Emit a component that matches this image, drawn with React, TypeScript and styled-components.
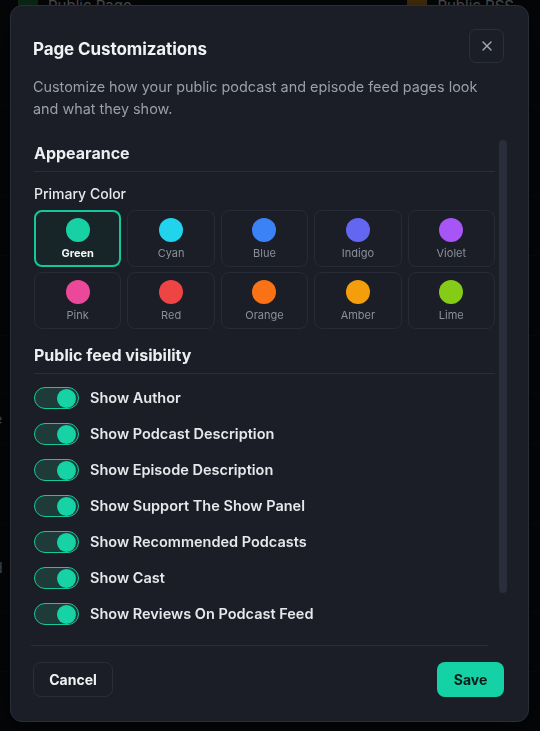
import React, { useState } from "react";
import styled, { createGlobalStyle, css } from "styled-components";
import { X } from "lucide-react";

const Global = createGlobalStyle`
  * { box-sizing: border-box; }
  html, body { margin: 0; padding: 0; background: #07080b; }
  body { font-family: Inter, "Noto Sans", sans-serif; -webkit-font-smoothing: antialiased; }
`;

const Page = styled.div`
  width: 540px;
  height: 731px;
  overflow: hidden;
  background: #0d1016;
  color: #c9ccd3;
  font-size: 15px;
`;

const TopLinks = styled.div`
  display: flex;
  justify-content: space-between;
  padding: 0 26px 0 18px;
  margin-top: -6px;
  height: 22px;
`;

const TopLink = styled.div`
  display: flex;
  align-items: center;
  gap: 10px;
  font-size: 15px;
  color: #d4d6db;
`;

const LinkIcon = styled.span<{ $c: string }>`
  width: 20px;
  height: 18px;
  border-radius: 4px;
  background: ${(p) => p.$c};
`;

const BgRows = styled.div`
  display: flex;
  flex-direction: column;
  padding-top: 50px;
`;

const BgRow = styled.div<{ $h: number; $accent?: boolean }>`
  height: ${(p) => p.$h}px;
  display: flex;
  justify-content: space-between;
  align-items: center;
  border-bottom: 1px solid #151a20;
  color: ${(p) => (p.$accent ? "#19d3a6" : "#cfd2d8")};
  font-size: 14px;
  white-space: nowrap;
`;

const BgLeft = styled.span`
  margin-left: -6px;
`;
const BgRight = styled.span`
  margin-right: -40px;
`;

const Overlay = styled.div`
  position: fixed;
  inset: 0;
  background: rgba(0, 0, 0, 0.62);
  display: flex;
  justify-content: flex-start;
  padding: 5px 0 0 10px;
`;

const Modal = styled.div`
  width: 519px;
  height: 717px;
  background: #1b1e26;
  border: 1px solid #2a2e38;
  border-radius: 12px;
  box-shadow: 0 10px 40px rgba(0, 0, 0, 0.6);
  display: flex;
  flex-direction: column;
  padding: 23px 24px 24px 22px;
`;

const Header = styled.div`
  display: flex;
  justify-content: space-between;
  align-items: flex-start;
`;

const Title = styled.h2`
  margin: 8px 0 0;
  font-size: 17px;
  line-height: 24px;
  font-weight: 700;
  color: #f1f2f4;
  letter-spacing: -0.1px;
`;

const CloseButton = styled.button`
  width: 35px;
  height: 34px;
  border-radius: 7px;
  border: 1px solid #2b2f3a;
  background: transparent;
  color: #a4a8b1;
  display: flex;
  align-items: center;
  justify-content: center;
  padding: 0;
  cursor: pointer;
`;

const Description = styled.p`
  margin: 13px 0 0;
  font-size: 14.4px;
  line-height: 22px;
  color: #9a9fa9;
`;

const ScrollFrame = styled.div`
  flex: 1;
  min-height: 0;
  margin-top: 18px;
  margin-right: -3px;
  display: flex;
`;

const ScrollBody = styled.div`
  flex: 1;
  min-width: 0;
  overflow-y: auto;
  scrollbar-width: none;
  &::-webkit-scrollbar { display: none; }
`;

const ScrollTrack = styled.div`
  width: 8px;
  padding-top: 2px;
  flex-shrink: 0;
`;

const ScrollThumb = styled.div`
  height: 453px;
  border-radius: 4px;
  background: #2a2e3a;
`;

const ScrollInner = styled.div`
  padding: 3px 4px 52px 1px;
`;

const SectionTitle = styled.h3<{ $gap?: number }>`
  margin: ${(p) => p.$gap ?? 0}px 0 0;
  padding-bottom: 6px;
  border-bottom: 1px solid #2a2e38;
  font-size: 16px;
  line-height: 24px;
  font-weight: 700;
  color: #eceef1;
`;

const FieldLabel = styled.div`
  margin-top: 12px;
  font-size: 14px;
  line-height: 20px;
  font-weight: 500;
  color: #e6e8ec;
`;

const SwatchGrid = styled.div`
  margin-top: 6px;
  display: grid;
  grid-template-columns: repeat(5, 1fr);
  column-gap: 6px;
  row-gap: 5px;
`;

const Swatch = styled.button<{ $selected: boolean }>`
  height: 57px;
  border-radius: 8px;
  border: 1px solid #272b35;
  background: transparent;
  display: flex;
  flex-direction: column;
  align-items: center;
  padding: 7px 0 0;
  gap: 4px;
  cursor: pointer;
  font-family: inherit;
  ${(p) =>
    p.$selected &&
    css`
      border: 2px solid #16c79c;
      background: #172529;
      padding-top: 6px;
    `}
`;

const Dot = styled.span<{ $c: string }>`
  width: 24px;
  height: 24px;
  border-radius: 50%;
  background: ${(p) => p.$c};
`;

const SwatchName = styled.span<{ $selected: boolean }>`
  font-size: 11px;
  line-height: 14px;
  color: ${(p) => (p.$selected ? "#f3f4f6" : "#8a8f99")};
  font-weight: ${(p) => (p.$selected ? 700 : 400)};
`;

const ToggleList = styled.div`
  margin-top: 13px;
  display: flex;
  flex-direction: column;
  gap: 14px;
`;

const ToggleRow = styled.label`
  display: flex;
  align-items: center;
  gap: 11px;
  cursor: pointer;
`;

const Track = styled.span<{ $on: boolean }>`
  width: 45px;
  height: 22px;
  border-radius: 11px;
  border: 1.5px solid ${(p) => (p.$on ? "#16c79c" : "#3a3f4b")};
  background: ${(p) => (p.$on ? "#1e3a39" : "#2a2e38")};
  display: flex;
  align-items: center;
  justify-content: ${(p) => (p.$on ? "flex-end" : "flex-start")};
  padding: 0 2px;
  flex-shrink: 0;
`;

const Knob = styled.span<{ $on: boolean }>`
  width: 19px;
  height: 19px;
  border-radius: 50%;
  background: ${(p) => (p.$on ? "#17d2a5" : "#9aa0aa")};
`;

const ToggleText = styled.span`
  font-size: 14.5px;
  line-height: 22px;
  font-weight: 600;
  color: #e6e8ec;
`;

const Footer = styled.div`
  margin-top: 13px;
  margin-left: -2px;
  margin-right: 16px;
  border-top: 1px solid #2a2e38;
`;

const FooterRow = styled.div`
  margin-top: 16px;
  margin-right: -16px;
  margin-left: 2px;
  display: flex;
  justify-content: space-between;
`;

const Button = styled.button<{ $primary?: boolean }>`
  height: 35px;
  border-radius: 8px;
  font-family: inherit;
  font-size: 14px;
  font-weight: 700;
  cursor: pointer;
  ${(p) =>
    p.$primary
      ? css`
          width: 67px;
          background: #14d2a6;
          border: none;
          color: #0d1a17;
        `
      : css`
          width: 80px;
          background: transparent;
          border: 1px solid #2a2e38;
          color: #f1f2f4;
        `}
`;

const colors = [
  { name: "Green", c: "#17d0a3" },
  { name: "Cyan", c: "#22d3ee" },
  { name: "Blue", c: "#3b82f6" },
  { name: "Indigo", c: "#6366f1" },
  { name: "Violet", c: "#a855f7" },
  { name: "Pink", c: "#ec4899" },
  { name: "Red", c: "#ef4444" },
  { name: "Orange", c: "#f97316" },
  { name: "Amber", c: "#f59e0b" },
  { name: "Lime", c: "#84cc16" },
];

const toggles = [
  "Show Author",
  "Show Podcast Description",
  "Show Episode Description",
  "Show Support The Show Panel",
  "Show Recommended Podcasts",
  "Show Cast",
  "Show Reviews On Podcast Feed",
];

export default function App() {
  const [selected, setSelected] = useState("Green");
  const [on, setOn] = useState<boolean[]>(toggles.map(() => true));

  return (
    <>
      <Global />
      <Page>
        <TopLinks>
          <TopLink>
            <LinkIcon $c="#1f6b3a" />
            Public Page
          </TopLink>
          <TopLink>
            <LinkIcon $c="#b7791f" />
            Public RSS
          </TopLink>
        </TopLinks>
        <BgRows>
          <BgRow $h={40}><BgLeft></BgLeft><BgRight>or</BgRight></BgRow>
          <BgRow $h={90} />
          <BgRow $h={60} />
          <BgRow $h={80} />
          <BgRow $h={58} $accent><BgLeft></BgLeft><BgRight>In</BgRight></BgRow>
          <BgRow $h={50}><BgLeft>e</BgLeft><BgRight>lo</BgRight></BgRow>
          <BgRow $h={80} />
          <BgRow $h={88}><BgLeft>d</BgLeft><BgRight></BgRight></BgRow>
          <BgRow $h={60} />
        </BgRows>
        <Overlay>
          <Modal>
            <Header>
              <Title>Page Customizations</Title>
              <CloseButton aria-label="Close">
                <X size={16} strokeWidth={2} />
              </CloseButton>
            </Header>
            <Description>
              Customize how your public podcast and episode feed pages look and what they show.
            </Description>
            <ScrollFrame>
              <ScrollBody>
                <ScrollInner>
                  <SectionTitle>Appearance</SectionTitle>
                  <FieldLabel>Primary Color</FieldLabel>
                  <SwatchGrid>
                    {colors.map((c) => (
                      <Swatch
                        key={c.name}
                        $selected={selected === c.name}
                        onClick={() => setSelected(c.name)}
                      >
                        <Dot $c={c.c} />
                        <SwatchName $selected={selected === c.name}>{c.name}</SwatchName>
                      </Swatch>
                    ))}
                  </SwatchGrid>
                  <SectionTitle $gap={14}>Public feed visibility</SectionTitle>
                  <ToggleList>
                    {toggles.map((t, i) => (
                      <ToggleRow
                        key={t}
                        onClick={() => setOn((prev) => prev.map((v, j) => (j === i ? !v : v)))}
                      >
                        <Track $on={on[i]}>
                          <Knob $on={on[i]} />
                        </Track>
                        <ToggleText>{t}</ToggleText>
                      </ToggleRow>
                    ))}
                  </ToggleList>
                </ScrollInner>
              </ScrollBody>
              <ScrollTrack>
                <ScrollThumb />
              </ScrollTrack>
            </ScrollFrame>
            <Footer>
              <FooterRow>
                <Button>Cancel</Button>
                <Button $primary>Save</Button>
              </FooterRow>
            </Footer>
          </Modal>
        </Overlay>
      </Page>
    </>
  );
}
